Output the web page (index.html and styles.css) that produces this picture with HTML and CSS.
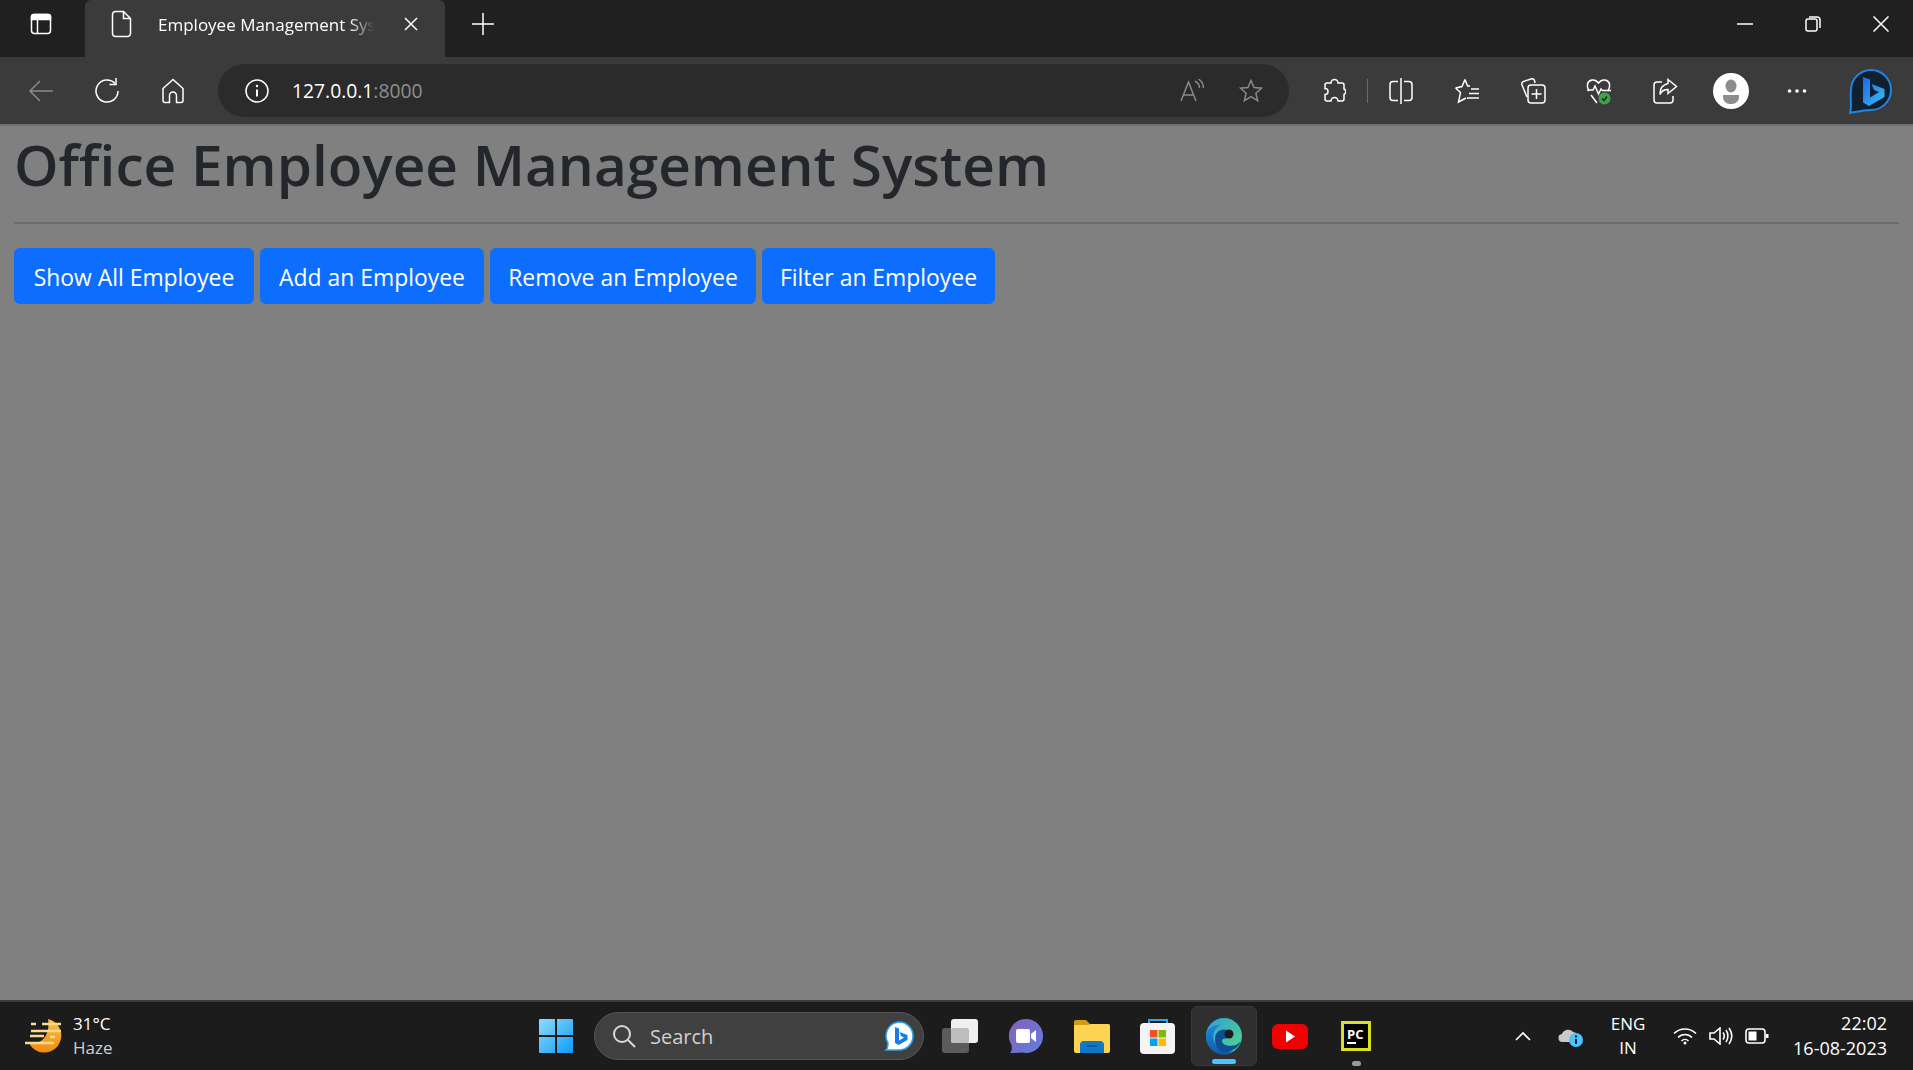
FILE: index.html
```html
<!DOCTYPE html>
<html lang="en">
<head>
    <meta charset="UTF-8">
    <title>Employee Management System</title>
    <link rel="stylesheet" href="styles.css">
</head>
<body>
<div class="tabstrip">
    <div class="tab-side">
        <svg class="ico" width="24" height="24" viewBox="0 0 24 24"><rect x="2.5" y="2.5" width="19" height="19" rx="3"/><path d="M2.5 4.5a2 2 0 0 1 2-2h15a2 2 0 0 1 2 2v3h-19z" fill="#fff"/><path d="M8.5 7v14"/></svg>
    </div>
    <div class="tab">
        <svg class="ico" width="24" height="28" viewBox="0 0 24 28"><path d="M5.500 1.500h8l7 7v15a3 3 0 0 1-3 3h-12a3 3 0 0 1-3-3v-19a3 3 0 0 1 3-3z"/><path d="M13.500 1.500v7h7"/></svg>
        <span class="tab-title">Employee Management System</span>
        <svg class="ico tab-close" width="14" height="14" viewBox="0 0 14 14"><path d="M1 1l12 12M13 1L1 13"/></svg>
    </div>
    <div class="tab-new">
        <svg class="ico" width="22" height="22" viewBox="0 0 22 22"><path d="M11 0v22M0 11h22"/></svg>
    </div>
    <div class="win-controls">
        <div class="win-btn"><svg class="ico" width="16" height="2" viewBox="0 0 16 2"><path d="M0 1h16"/></svg></div>
        <div class="win-btn"><svg class="ico" width="16" height="16" viewBox="0 0 16 16"><rect x="1" y="3" width="11" height="12" rx="2"/><path d="M4 1h8a3 3 0 0 1 3 3v8"/></svg></div>
        <div class="win-btn"><svg class="ico" width="16" height="16" viewBox="0 0 16 16"><path d="M0.500 0.500l15 15M15.500 0.500l-15 15"/></svg></div>
    </div>
</div>

<div class="toolbar">
    <div class="tool">
        <svg class="ico dim" width="26" height="24" viewBox="0 0 26 24"><path d="M25 12H2M12 2L2 12l10 10"/></svg>
    </div>
    <div class="tool">
        <svg class="ico" width="26" height="26" viewBox="0 0 26 26"><path d="M21 5.500a11 11 0 1 0 3 7.500"/><path d="M22 0v6.500h-6.500"/></svg>
    </div>
    <div class="tool">
        <svg class="ico" width="24" height="26" viewBox="0 0 24 26"><path d="M12 1.500L2 10.500v12a2 2 0 0 0 2 2h4.500v-7a3.500 3.500 0 0 1 7 0v7H20a2 2 0 0 0 2-2v-12z"/></svg>
    </div>
    <div class="address">
        <svg class="ico" width="24" height="24" viewBox="0 0 24 24"><circle cx="12" cy="12" r="11"/><path d="M12 10.500v7" stroke-width="2"/><circle cx="12" cy="7" r="1.200" fill="#fff" stroke="none"/></svg>
        <span class="url">127.0.0.1<span class="url-port">:8000</span></span>
        <svg class="ico dim read-aloud" width="24" height="24" viewBox="0 0 24 24"><path d="M1 22L8.500 3 16 22M3.500 16h10M15 2c3 1.500 4.500 4 4.500 7M18.500 0c3 2 5 5 5 9"/></svg>
        <svg class="ico dim star" width="24" height="24" viewBox="0 0 24 24"><path d="M12 1.500l3.100 7 7.400.7-5.600 5 1.700 7.400L12 17.700l-6.600 3.900 1.700-7.400-5.600-5 7.400-.7z"/></svg>
    </div>
    <div class="tool tool-first">
        <svg class="ico" width="24" height="26" viewBox="0 0 24 26"><path d="M9 5a3.500 3.500 0 0 1 7 0h4a2 2 0 0 1 2 2v4a3 3 0 0 1 0 5.500V21a2 2 0 0 1-2 2h-4a3.500 3.500 0 0 0-7 0H5a2 2 0 0 1-2-2v-4.500a3 3 0 0 0 0-6V7a2 2 0 0 1 2-2z"/></svg>
    </div>
    <div class="tool-sep"></div>
    <div class="tool">
        <svg class="ico" width="24" height="26" viewBox="0 0 24 26"><path d="M12 0v26M9 3.500H4a3 3 0 0 0-3 3v13a3 3 0 0 0 3 3h5M15 3.500h5a3 3 0 0 1 3 3v13a3 3 0 0 1-3 3h-5"/></svg>
    </div>
    <div class="tool">
        <svg class="ico" width="26" height="26" viewBox="0 0 26 26"><path d="M11 1.500l2.600 6.500H16M1.500 10l6.500-1.500L11 1.500M1.500 10l5 4.500-2 9.500 7.500-4M17 11h8M15 15.500h10M13 20h12"/></svg>
    </div>
    <div class="tool">
        <svg class="ico" width="26" height="26" viewBox="0 0 26 26"><path d="M7 19L2 7c-.5-1.500 0-3 1.500-3.500L11 1c1.500-.5 3 0 3.500 1.500L15 5"/><rect x="8" y="7" width="17" height="18" rx="3"/><path d="M16.500 11v10M11.500 16h10"/></svg>
    </div>
    <div class="tool">
        <svg width="28" height="28" viewBox="0 0 28 28" class="ico"><path d="M4 14C1 9 2 4 7 3c3-.5 5 1 6.500 3 1.500-2 3.500-3.500 6.500-3 5 1 6 6 3 11"/><path d="M2 13h6l2-4 3.500 8 2.500-5 1.500 1.500H26M6 18l6 8"/><circle cx="19.500" cy="21.500" r="6" fill="#3fa34d" stroke="none"/><path d="M17 21.500l2 2 3-4" stroke="#14301a"/></svg>
    </div>
    <div class="tool">
        <svg class="ico" width="26" height="26" viewBox="0 0 26 26"><path d="M10 4H5a3 3 0 0 0-3 3v15a3 3 0 0 0 3 3h13a3 3 0 0 0 3-3v-4"/><path d="M16 1.500l8.500 7-8.500 7v-4c-4 0-6.500 1.500-8 5 0-6 3-10 8-11z"/></svg>
    </div>
    <div class="tool">
        <div class="avatar">
            <svg width="36" height="36" viewBox="0 0 36 36"><ellipse cx="18" cy="13" rx="5.500" ry="6.500" fill="#8c8c8c"/><path d="M10 22h16v2a7 7 0 0 1-7 7h-2a7 7 0 0 1-7-7z" fill="#8c8c8c"/></svg>
        </div>
    </div>
    <div class="tool">
        <svg width="20" height="4" viewBox="0 0 20 4"><circle cx="2.500" cy="2" r="1.800" fill="#fff"/><circle cx="10" cy="2" r="1.800" fill="#fff"/><circle cx="17.500" cy="2" r="1.800" fill="#fff"/></svg>
    </div>
    <div class="bing-btn">
        <svg width="46" height="46" viewBox="0 0 46 46">
            <defs><linearGradient id="bingGrad" x1="0" y1="0" x2="1" y2="1"><stop offset="0" stop-color="#1b66e8"/><stop offset="1" stop-color="#35c1f1"/></linearGradient></defs>
            <path d="M24 2A20 20 0 1 1 24 42C16 42 9 44 3 45C5 40 3 30 4 22A20 20 0 0 1 24 2Z" fill="#10202e" stroke="#1c86e6" stroke-width="2"/>
            <path d="M16 9l7 2.500v18l9-5.500-5-2-2.500-6 13 5v8L22 38l-6-3.500z" fill="url(#bingGrad)"/>
        </svg>
    </div>
</div>

<main class="page">
    <h1 class="title">Office Employee Management System</h1>
    <hr class="divider">
    <div class="actions">
        <a class="btn btn-show">Show All Employee</a>
        <a class="btn btn-add">Add an Employee</a>
        <a class="btn btn-remove">Remove an Employee</a>
        <a class="btn btn-filter">Filter an Employee</a>
    </div>
</main>

<footer class="taskbar">
    <div class="weather">
        <svg width="38" height="36" viewBox="0 0 38 36">
            <defs><linearGradient id="sunGrad" x1="0" y1="0" x2="0" y2="1"><stop offset="0" stop-color="#f9c440"/><stop offset="1" stop-color="#f08a14"/></linearGradient></defs>
            <path d="M24 1A17 17 0 1 1 5 25C16 28 27 18 24 1Z" fill="url(#sunGrad)"/>
            <path d="M7 6h5M18 6h19M7 13h30M6 18h14M26 19h5M1 25h29" stroke="#f8dc8e" stroke-width="2.500" fill="none"/>
        </svg>
        <div class="weather-text">
            <span>31°C</span>
            <span class="weather-sub">Haze</span>
        </div>
    </div>
    <div class="task-item task-start">
        <svg width="36" height="36" viewBox="0 0 36 36">
            <defs><linearGradient id="winGrad" x1="0" y1="0" x2="1" y2="1"><stop offset="0" stop-color="#8ddcff"/><stop offset="1" stop-color="#0f9bf5"/></linearGradient></defs>
            <path d="M1 2a1 1 0 0 1 1-1h15v16H1zM19 1h15a1 1 0 0 1 1 1v15H19zM1 19h16v16H2a1 1 0 0 1-1-1zM19 19h16v15a1 1 0 0 1-1 1H19z" fill="url(#winGrad)"/>
        </svg>
    </div>
    <div class="search">
        <svg class="search-ico" width="24" height="24" viewBox="0 0 24 24"><circle cx="10" cy="10" r="8"/><path d="M16 16l7 7"/></svg>
        <span class="search-text">Search</span>
        <svg class="search-bing" width="30" height="30" viewBox="0 0 30 30">
            <path d="M15 1a14 14 0 1 1 0 28H2c2-2 2-5 2-7A14 14 0 0 1 15 1z" fill="#fff" stroke="#2aa6f2" stroke-width="1.500"/>
            <path d="M11 6l4 1.500v12l5-3-3-1.500-1.500-4 8 3v5l-9 5-3.500-2z" fill="#1b7be8"/>
        </svg>
    </div>
    <div class="task-item task-view">
        <svg width="36" height="34" viewBox="0 0 36 34">
            <rect x="0" y="9" width="27" height="25" rx="3" fill="#5c5c5c"/>
            <rect x="9" y="0" width="27" height="24" rx="3" fill="#f0f0f0"/>
            <rect x="9" y="9" width="18" height="15" rx="2" fill="#bdbdbd"/>
        </svg>
    </div>
    <div class="task-item">
        <svg width="34" height="34" viewBox="0 0 34 34">
            <defs><linearGradient id="meetGrad" x1="0" y1="0" x2="1" y2="1"><stop offset="0" stop-color="#8a5fb8"/><stop offset="1" stop-color="#5d7fe0"/></linearGradient></defs>
            <path d="M17 0a17 17 0 1 1-4 33.500C9 34 5 34 1 34c2-2 2-5 1.500-8A17 17 0 0 1 17 0z" fill="url(#meetGrad)"/>
            <rect x="7" y="10" width="14" height="14" rx="2" fill="#fff"/>
            <path d="M22 15l5-4v12l-5-4z" fill="#fff"/>
        </svg>
    </div>
    <div class="task-item">
        <svg width="36" height="33" viewBox="0 0 36 33">
            <path d="M0 2a2 2 0 0 1 2-2h10l4 4h18a2 2 0 0 1 2 2v4H0z" fill="#d19c12"/>
            <path d="M0 5h14l3-1h17a2 2 0 0 1 2 2v25a2 2 0 0 1-2 2H2a2 2 0 0 1-2-2z" fill="#fdd352"/>
            <path d="M6 33V25a4 4 0 0 1 4-4h16a4 4 0 0 1 4 4v8z" fill="#0f78c8"/>
            <path d="M13 26h10" stroke="#0a4f8a" stroke-width="1.500"/>
        </svg>
    </div>
    <div class="task-item">
        <svg width="36" height="36" viewBox="0 0 36 36">
            <path d="M9 6V2h18v4" fill="none" stroke="#2aa6e8" stroke-width="2"/>
            <rect x="0" y="5" width="35" height="31" rx="4" fill="#f4f4f4"/>
            <rect x="10" y="12" width="7.500" height="7.500" fill="#f25022"/>
            <rect x="18.500" y="12" width="7.500" height="7.500" fill="#7fba00"/>
            <rect x="10" y="20.500" width="7.500" height="7.500" fill="#00a4ef"/>
            <rect x="18.500" y="20.500" width="7.500" height="7.500" fill="#ffb900"/>
        </svg>
    </div>
    <div class="task-item task-active">
        <svg width="38" height="38" viewBox="0 0 38 38">
            <defs>
                <linearGradient id="edgeTop" x1="0" y1="0" x2="1" y2="1"><stop offset="0" stop-color="#2d9fd8"/><stop offset="1" stop-color="#55d88a"/></linearGradient>
                <linearGradient id="edgeLow" x1="0" y1="0" x2="0" y2="1"><stop offset="0" stop-color="#1c8ae0"/><stop offset="1" stop-color="#0f5aa8"/></linearGradient>
            </defs>
            <circle cx="19" cy="19" r="18" fill="url(#edgeTop)"/>
            <path d="M1 19C2 10 10 7 16 8c-7 3-10 10-6 18 3 6 11 10 20 8a18 18 0 0 1-29-15z" fill="url(#edgeLow)"/>
            <path d="M10 22c0-7 6-11 12-9 4 2 5 6 1 8-3 1-6 0-6 3 0 4 7 6 14 4 2-1 4-3 5-4-2 6-8 11-16 11-6 0-10-6-10-13z" fill="#0e4f94"/>
            <circle cx="24" cy="17" r="4.500" fill="#1c1c1c"/>
        </svg>
        <span class="active-bar"></span>
    </div>
    <div class="task-item">
        <svg width="36" height="25" viewBox="0 0 36 25">
            <rect width="36" height="25" rx="6" fill="#f00000"/>
            <path d="M14 6.500l9 6-9 6z" fill="#fff"/>
        </svg>
    </div>
    <div class="task-item">
        <div class="pycharm">
            <span class="pc-label">PC</span>
            <span class="pc-line"></span>
        </div>
        <span class="running-dot"></span>
    </div>
    <div class="tray">
        <svg class="tray-ico tray-chevron" width="16" height="10" viewBox="0 0 16 10"><path d="M1 9l7-7 7 7"/></svg>
        <svg class="tray-cloud" width="26" height="22" viewBox="0 0 26 22">
            <path d="M5 17a4 4 0 0 1-1-8c1-4 8-6 11-2 3 0 5 3 4 6l-5 4z" fill="#c9c9c9"/>
            <circle cx="18" cy="15" r="7" fill="#4cc2ff"/>
            <rect x="17" y="14" width="2" height="5" fill="#10222e"/>
            <rect x="17" y="10.500" width="2" height="2" fill="#10222e"/>
        </svg>
        <div class="lang"><span>ENG</span><span>IN</span></div>
        <svg class="tray-ico tray-wifi" width="24" height="18" viewBox="0 0 24 18"><path d="M1 6.500c6-6 16-6 22 0M5 10.500c4-4 10-4 14 0M8.500 14c2-2 5-2 7 0"/><circle cx="12" cy="16" r="1.500" fill="#fff" stroke="none"/></svg>
        <svg class="tray-ico tray-vol" width="24" height="18" viewBox="0 0 24 18"><path d="M1 6v6h4l6 5V1L5 6zM14 5.500c1.500 2 1.500 5 0 7M17 3c2.500 3.500 2.500 8.500 0 12M20 1c3.500 5 3.500 11 0 16"/></svg>
        <svg class="tray-ico tray-batt" width="24" height="16" viewBox="0 0 24 16"><rect x="1" y="1" width="19" height="14" rx="3"/><rect x="3.500" y="3.500" width="8" height="9" fill="#fff" stroke="none"/><rect x="21" y="6" width="2.500" height="4" fill="#fff" stroke="none"/></svg>
        <div class="clock"><span>22:02</span><span>16-08-2023</span></div>
    </div>
</footer>
</body>
</html>
```

FILE: styles.css
```css
* {
    box-sizing: border-box;
}
body {
    margin: 0;
    height: 100vh;
    display: flex;
    flex-direction: column;
    overflow: hidden;
    font-family: "Open Sans", "Noto Sans", sans-serif;
    background-color: #808080;
}
svg {
    display: block;
    flex-shrink: 0;
}
.ico {
    fill: none;
    stroke: #fff;
    stroke-width: 1.5;
}
.ico.dim {
    stroke: #8a8a8a;
}

/* tab strip */
.tabstrip {
    height: 57px;
    display: flex;
    background-color: #202020;
}
.tab-side {
    width: 85px;
    padding: 0 0 9px 29px;
    display: flex;
    align-items: center;
}
.tab {
    width: 360px;
    padding: 0 0 9px 25px;
    display: flex;
    align-items: center;
    background-color: #3b3b3b;
    border-radius: 6px 6px 0 0;
}
.tab-title {
    width: 217px;
    margin-left: 24px;
    overflow: hidden;
    white-space: nowrap;
    font-size: 17px;
    color: #fff;
    -webkit-mask-image: linear-gradient(to right, #000 88%, transparent 100%);
    mask-image: linear-gradient(to right, #000 88%, transparent 100%);
}
.tab-close {
    margin-left: 29px;
}
.tab-new {
    margin-left: 27px;
    padding-bottom: 9px;
    display: flex;
    align-items: center;
}
.win-controls {
    margin-left: auto;
    margin-right: -2px;
    padding-bottom: 9px;
    display: flex;
}
.win-btn {
    width: 68px;
    display: flex;
    align-items: center;
    justify-content: center;
}

/* toolbar */
.toolbar {
    height: 67px;
    padding-left: 8px;
    display: flex;
    align-items: center;
    background-color: #3b3b3b;
}
.tool {
    width: 66px;
    display: flex;
    justify-content: center;
    align-items: center;
}
.address {
    width: 1071px;
    height: 53px;
    margin-left: 12px;
    padding: 0 26px 0 27px;
    display: flex;
    align-items: center;
    background-color: #2b2b2b;
    border-radius: 27px;
}
.url {
    margin-left: 23px;
    font-size: 19.3px;
    color: #fff;
}
.url-port {
    color: #8f8f8f;
}
.read-aloud {
    margin-left: auto;
}
.star {
    margin-left: 35px;
}
.tool-first {
    margin-left: 12px;
}
.tool-sep {
    width: 1px;
    height: 24px;
    background-color: #6a6a6a;
}
.avatar {
    width: 36px;
    height: 36px;
    border-radius: 50%;
    background-color: #fff;
}
.bing-btn {
    margin-left: 17px;
}

/* page content */
.page {
    flex: 1;
    padding: 0 14px;
    border-top: 2px solid #707070;
}
.title {
    margin: 0;
    padding-top: 4px;
    font-size: 56.7px;
    line-height: 68px;
    font-weight: 600;
    color: #23272b;
}
.divider {
    height: 2px;
    margin: 24px 0 24px;
    border: none;
    background-color: #6c6c6c;
}
.actions {
    display: flex;
    gap: 6px;
}
.btn {
    height: 56px;
    padding-top: 2px;
    display: flex;
    align-items: center;
    justify-content: center;
    font-size: 22.9px;
    color: #fff;
    background-color: #0d6efd;
    border-radius: 6px;
}
.btn-show {
    width: 240px;
}
.btn-add {
    width: 224px;
}
.btn-remove {
    width: 266px;
}
.btn-filter {
    width: 233px;
}

/* taskbar */
.taskbar {
    height: 70px;
    display: flex;
    align-items: center;
    background-color: #1c1c1c;
    border-top: 2px solid #3c3c3c;
    color: #fff;
}
.weather {
    width: 523px;
    padding-left: 24px;
    display: flex;
    align-items: center;
    gap: 11px;
}
.weather-text {
    display: flex;
    flex-direction: column;
    font-size: 17px;
    line-height: 24px;
}
.weather-sub {
    color: #cfcfcf;
}
.task-item {
    position: relative;
    width: 66px;
    height: 60px;
    display: flex;
    align-items: center;
    justify-content: center;
}
.search {
    width: 330px;
    height: 48px;
    margin-left: 5px;
    padding: 0 9px 0 17px;
    display: flex;
    align-items: center;
    background-color: #404040;
    border: 1px solid #555;
    border-radius: 24px;
}
.search-ico {
    fill: none;
    stroke: #d8d8d8;
    stroke-width: 2;
}
.search-text {
    margin-left: 14px;
    font-size: 20px;
    color: #d0d0d0;
}
.search-bing {
    margin-left: auto;
}
.task-view {
    margin-left: 3px;
}
.task-active {
    background-color: #2f2f2f;
    border: 1px solid #383838;
    border-radius: 6px;
}
.active-bar {
    position: absolute;
    left: 20px;
    bottom: 1px;
    width: 24px;
    height: 5px;
    border-radius: 3px;
    background-color: #4cc2ff;
}
.pycharm {
    width: 30px;
    height: 30px;
    padding: 4px 3px 0;
    display: flex;
    flex-direction: column;
    background-color: #000;
    border: 3px solid #d9e021;
}
.pc-label {
    font-size: 13px;
    line-height: 13px;
    font-weight: 700;
    color: #fff;
}
.pc-line {
    width: 9px;
    height: 2px;
    margin-top: 1px;
    background-color: #fff;
}
.running-dot {
    position: absolute;
    left: 29px;
    bottom: 0;
    width: 9px;
    height: 5px;
    border-radius: 3px;
    background-color: #9a9a9a;
}
.tray {
    margin-left: auto;
    padding-right: 26px;
    display: flex;
    align-items: center;
}
.tray-ico {
    fill: none;
    stroke: #fff;
    stroke-width: 1.6;
}
.tray-cloud {
    margin-left: 27px;
}
.lang {
    width: 44px;
    margin-left: 22px;
    display: flex;
    flex-direction: column;
    align-items: center;
    font-size: 17px;
    line-height: 24px;
}
.tray-wifi {
    margin-left: 23px;
}
.tray-vol {
    margin-left: 12px;
}
.tray-batt {
    margin-left: 12px;
}
.clock {
    width: 118px;
    display: flex;
    flex-direction: column;
    align-items: flex-end;
    font-size: 18px;
    line-height: 25px;
}
```
